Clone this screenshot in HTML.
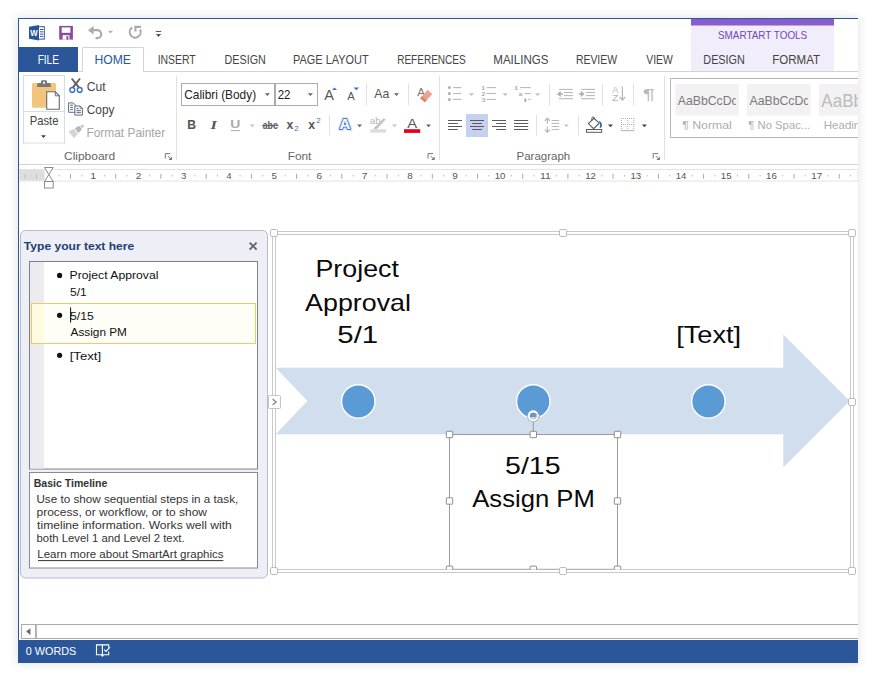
<!DOCTYPE html>
<html>
<head>
<meta charset="utf-8">
<title>Document1 - Word</title>
<style>
html,body{margin:0;padding:0;}
body{width:876px;height:681px;overflow:hidden;background:#fff;position:relative;font-family:"Liberation Sans",sans-serif;}
svg{display:block;position:absolute;left:0;top:0;overflow:visible;}
svg text{font-family:"Liberation Sans",sans-serif;white-space:pre;}
.rg{position:absolute;overflow:hidden;}
#shadow{position:absolute;left:18px;top:18px;width:840px;height:645px;background:#fff;box-shadow:0 0 9px 1px rgba(0,0,0,.11);}
#frame{position:absolute;left:18px;top:18px;width:840px;height:645px;box-sizing:border-box;border-top:1px solid #2b579a;border-left:1px solid #2b579a;pointer-events:none;}
</style>
</head>
<body>
<div id="shadow"></div>
<!-- title bar / quick access toolbar -->
<div class="rg" style="left:18px;top:18px;width:840px;height:29px;"><svg width="840" height="29" viewBox="18 18 840 29">
<rect x="691" y="25" width="143" height="22" fill="#f1edfa"/>
<rect x="691" y="18" width="143" height="7.5" fill="#8a5dcd"/>
<text x="717.95" y="39" font-size="11" fill="#7048b6" textLength="89.3" lengthAdjust="spacingAndGlyphs">SMARTART TOOLS</text>
<rect x="38" y="26.7" width="6.3" height="12.4" fill="#fff" stroke="#2b579a" stroke-width="1"/>
<line x1="40" y1="29.5" x2="43.2" y2="29.5" stroke="#2b579a" stroke-width="1"/>
<line x1="40" y1="31.8" x2="43.2" y2="31.8" stroke="#2b579a" stroke-width="1"/>
<line x1="40" y1="34.1" x2="43.2" y2="34.1" stroke="#2b579a" stroke-width="1"/>
<line x1="40" y1="36.4" x2="43.2" y2="36.4" stroke="#2b579a" stroke-width="1"/>
<path d="M29 26.8L39 25V40.6L29 38.8Z" fill="#2b579a"/>
<text x="30.2" y="36.2" font-size="9" fill="#fff" textLength="7.41" lengthAdjust="spacingAndGlyphs" font-weight="bold">W</text>
<path d="M59.2 25.9H72.9V39.6H59.2Z" fill="#8a4a9f"/>
<rect x="61.7" y="27.4" width="8.7" height="5.4" fill="#fff"/>
<rect x="62.6" y="35.2" width="6.9" height="4.4" fill="#fff"/>
<rect x="66.4" y="36.2" width="2.0" height="3.4" fill="#8a4a9f"/>
<path d="M88 30.2L93.6 25.9V34.5Z" fill="#ababab"/>
<path d="M92.6 30.2H97.2A4 4 0 0 1 97.2 38.2H95.6" fill="none" stroke="#ababab" stroke-width="2.2"/>
<path d="M107.9 30.8h5.2l-2.6 2.8z" fill="#b5b5b5"/>
<path d="M132.2 27.5A5.5 5.5 0 1 0 140.1 29.6" fill="none" stroke="#ababab" stroke-width="2.1"/>
<path d="M135.4 31.6V26.9H141" fill="none" stroke="#ababab" stroke-width="2.1"/>
<line x1="155.8" y1="31.5" x2="161.2" y2="31.5" stroke="#555" stroke-width="1"/>
<path d="M155.8 34H161.2L158.5 36.9Z" fill="#555"/>
</svg></div>
<!-- ribbon tabs -->
<div class="rg" style="left:18px;top:47px;width:840px;height:25px;"><svg width="840" height="25" viewBox="18 47 840 25">
<rect x="691" y="47" width="143" height="24.5" fill="#f1edfa"/>
<line x1="18" y1="71.5" x2="858" y2="71.5" stroke="#d4d4d4" stroke-width="1"/>
<rect x="18" y="47" width="60" height="25" fill="#2b579a"/>
<text x="37.67" y="64" font-size="12.2" fill="#fff" textLength="21.25" lengthAdjust="spacingAndGlyphs">FILE</text>
<path d="M82.5 72V47.5H143.5V72" fill="#fff" stroke="#d4d4d4" stroke-width="1"/>
<rect x="83" y="70" width="60" height="3" fill="#fff"/>
<text x="94.4" y="64" font-size="12.2" fill="#2b579a" textLength="36.52" lengthAdjust="spacingAndGlyphs">HOME</text>
<text x="157.63" y="64" font-size="12.2" fill="#444" textLength="38.12" lengthAdjust="spacingAndGlyphs">INSERT</text>
<text x="224.51" y="64" font-size="12.2" fill="#444" textLength="41.37" lengthAdjust="spacingAndGlyphs">DESIGN</text>
<text x="293.1" y="64" font-size="12.2" fill="#444" textLength="75.47" lengthAdjust="spacingAndGlyphs">PAGE LAYOUT</text>
<text x="397.17" y="64" font-size="12.2" fill="#444" textLength="68.57" lengthAdjust="spacingAndGlyphs">REFERENCES</text>
<text x="493.25" y="64" font-size="12.2" fill="#444" textLength="55.26" lengthAdjust="spacingAndGlyphs">MAILINGS</text>
<text x="575.94" y="64" font-size="12.2" fill="#444" textLength="41.11" lengthAdjust="spacingAndGlyphs">REVIEW</text>
<text x="646.25" y="64" font-size="12.2" fill="#444" textLength="26.49" lengthAdjust="spacingAndGlyphs">VIEW</text>
<text x="703.31" y="64" font-size="12.2" fill="#444" textLength="41.58" lengthAdjust="spacingAndGlyphs">DESIGN</text>
<text x="772.25" y="64" font-size="12.2" fill="#444" textLength="47.81" lengthAdjust="spacingAndGlyphs">FORMAT</text>
</svg></div>
<!-- ribbon: Home tab -->
<div class="rg" style="left:18px;top:72px;width:840px;height:92px;"><svg width="840" height="92" viewBox="18 72 840 92">
<rect x="23.5" y="75.5" width="41" height="67.5" fill="#fff" stroke="#d7dce4" stroke-width="1"/>
<line x1="23.5" y1="111.5" x2="64.5" y2="111.5" stroke="#d7dce4" stroke-width="1"/>
<rect x="32" y="83" width="24" height="24.8" fill="#f2c57c" rx="1.5"/>
<path d="M37.2 86.9V84.2Q37.2 83 38.6 83H41V81.4Q41 80.2 42.2 80.2H45.8Q47 80.2 47 81.4V83H49.4Q50.8 83 50.8 84.2V86.9Z" fill="#787878"/>
<rect x="43" y="81.8" width="2" height="1.8" fill="#fff"/>
<path d="M46.7 91.8H55.3L59.3 95.8V109.3H46.7Z" fill="#fff" stroke="#6a6a6a" stroke-width="1.1"/>
<path d="M55.3 91.8V95.8H59.3" fill="none" stroke="#6a6a6a" stroke-width="1"/>
<text x="29.67" y="124.7" font-size="12.2" fill="#444" textLength="28.83" lengthAdjust="spacingAndGlyphs">Paste</text>
<path d="M41.0 135.3h5l-2.5 2.6z" fill="#444"/>
<path d="M71.7 78.5L79 87.6" fill="none" stroke="#5f5f5f" stroke-width="1.9"/>
<path d="M80 78.5L72.8 87.6" fill="none" stroke="#5f5f5f" stroke-width="1.9"/>
<circle cx="72.3" cy="89.9" r="2.4" fill="#fff" stroke="#3d73bd" stroke-width="1.4"/>
<circle cx="79.7" cy="89.9" r="2.4" fill="#fff" stroke="#3d73bd" stroke-width="1.4"/>
<text x="86.79" y="90.6" font-size="12.2" fill="#444" textLength="18.91" lengthAdjust="spacingAndGlyphs">Cut</text>
<path d="M68.6 102.9H73.2L75.4 105.1V112.3H68.6Z" fill="#fff" stroke="#6a6a6a" stroke-width="1"/>
<path d="M74.8 106H80.1L82.4 108.3V115.1H74.8Z" fill="#fff" stroke="#6a6a6a" stroke-width="1"/>
<path d="M80.1 106V108.3H82.4" fill="none" stroke="#6a6a6a" stroke-width="0.8"/>
<line x1="70.2" y1="105.2" x2="72.9" y2="105.2" stroke="#3a62a8" stroke-width="1"/>
<line x1="70.2" y1="107.4" x2="72.9" y2="107.4" stroke="#3a62a8" stroke-width="1"/>
<line x1="70.2" y1="109.6" x2="72.9" y2="109.6" stroke="#3a62a8" stroke-width="1"/>
<line x1="76.4" y1="108.7" x2="78.6" y2="108.7" stroke="#3a62a8" stroke-width="1"/>
<line x1="76.4" y1="110.7" x2="80.9" y2="110.7" stroke="#3a62a8" stroke-width="1"/>
<line x1="76.4" y1="112.7" x2="80.9" y2="112.7" stroke="#3a62a8" stroke-width="1"/>
<text x="86.81" y="113.9" font-size="12.2" fill="#444" textLength="27.62" lengthAdjust="spacingAndGlyphs">Copy</text>
<path d="M68.4 131.8L74 128.8L77.8 133.8L74.2 138.2Z" fill="#d4d4d4"/>
<path d="M74.8 128.2L79.2 125.8L81.8 129.6L78.4 133Z" fill="#b6b6b6"/>
<path d="M80.2 126L83 124.6L84.2 126.4L81.6 128.2Z" fill="#c6c6c6"/>
<text x="86.42" y="136.8" font-size="12.2" fill="#a6a6a6" textLength="78.77" lengthAdjust="spacingAndGlyphs">Format Painter</text>
<text x="64.0" y="160" font-size="11.6" fill="#666" textLength="51.15" lengthAdjust="spacingAndGlyphs">Clipboard</text>
<path d="M165.3 158.6V153.6H170.3" fill="none" stroke="#777" stroke-width="1"/>
<path d="M168.5 160.1H172.0V156.6Z" fill="#777"/>
<line x1="167.9" y1="156.0" x2="171.3" y2="159.4" stroke="#777" stroke-width="1"/>
<line x1="176.5" y1="76" x2="176.5" y2="160" stroke="#e1e1e1" stroke-width="1"/>
<rect x="181.5" y="83.5" width="93" height="22" fill="#fff" stroke="#ababab" stroke-width="1"/>
<rect x="275.5" y="83.5" width="42" height="22" fill="#fff" stroke="#ababab" stroke-width="1"/>
<text x="184.21" y="99.3" font-size="12.2" fill="#222" textLength="71.9" lengthAdjust="spacingAndGlyphs">Calibri (Body)</text>
<path d="M264.9 93.3h5l-2.5 2.6z" fill="#666"/>
<text x="277.73" y="99.3" font-size="12.2" fill="#222" textLength="12.67" lengthAdjust="spacingAndGlyphs">22</text>
<path d="M307.9 93.3h5l-2.5 2.6z" fill="#666"/>
<text x="324.16" y="99.7" font-size="14.6" fill="#555" textLength="9.67" lengthAdjust="spacingAndGlyphs">A</text>
<path d="M332 90.1H337L334.5 87.5Z" fill="#3d73bd"/>
<text x="347.37" y="99.7" font-size="10.6" fill="#555" textLength="7.45" lengthAdjust="spacingAndGlyphs">A</text>
<path d="M353.6 87.6H359L356.3 90.3Z" fill="#3d73bd"/>
<line x1="366.5" y1="83.5" x2="366.5" y2="105.5" stroke="#e1e1e1" stroke-width="1"/>
<text x="374.27" y="97.8" font-size="12.4" fill="#555" textLength="15.01" lengthAdjust="spacingAndGlyphs">Aa</text>
<path d="M394.0 93.3h5l-2.5 2.6z" fill="#666"/>
<line x1="408.5" y1="83.5" x2="408.5" y2="105.5" stroke="#e1e1e1" stroke-width="1"/>
<text x="417.37" y="95.6" font-size="11.5" fill="#777" textLength="7.65" lengthAdjust="spacingAndGlyphs">A</text>
<path d="M420.2 98.2L427.6 89.8L432.3 94L424.9 102.2Z" fill="#e9a493"/>
<path d="M420.2 98.2L422 96.2L426.7 100.3L424.9 102.2Z" fill="#e0806a"/>
<text x="187.18" y="128.9" font-size="12" fill="#555" textLength="8.76" lengthAdjust="spacingAndGlyphs" font-weight="bold">B</text>
<text x="210.4" y="128.9" font-size="13.4" fill="#555" textLength="6.4" lengthAdjust="spacingAndGlyphs" font-weight="bold" font-style="italic" style="font-family:'Liberation Serif',serif">I</text>
<text x="230.36" y="128.4" font-size="11.4" fill="#ababab" textLength="10.07" lengthAdjust="spacingAndGlyphs" font-weight="bold">U</text>
<line x1="231" y1="130.6" x2="240" y2="130.6" stroke="#ababab" stroke-width="1"/>
<path d="M249.8 124.6h5l-2.5 2.6z" fill="#c6c6c6"/>
<text x="262.74" y="128.6" font-size="11" fill="#5c5c5c" textLength="15.11" lengthAdjust="spacingAndGlyphs" font-weight="bold">abc</text>
<line x1="262.2" y1="125.6" x2="278.6" y2="125.6" stroke="#5c5c5c" stroke-width="1"/>
<text x="286.51" y="128.9" font-size="12.6" fill="#555" textLength="6.8" lengthAdjust="spacingAndGlyphs" font-weight="bold">x</text>
<text x="294.2" y="131.2" font-size="6.4" fill="#3d73bd" textLength="4.4" lengthAdjust="spacingAndGlyphs">2</text>
<text x="308.21" y="128.9" font-size="12.6" fill="#555" textLength="6.8" lengthAdjust="spacingAndGlyphs" font-weight="bold">x</text>
<text x="316.2" y="123.4" font-size="6.4" fill="#3d73bd" textLength="4.4" lengthAdjust="spacingAndGlyphs">2</text>
<line x1="329.5" y1="115" x2="329.5" y2="135.5" stroke="#e1e1e1" stroke-width="1"/>
<text x="339.43" y="129.2" font-size="14.6" fill="#fff" textLength="10.78" lengthAdjust="spacingAndGlyphs" font-weight="bold" stroke="#d6e5f8" stroke-width="4.2" stroke-linejoin="round">A</text>
<text x="339.43" y="129.2" font-size="14.6" fill="#fff" textLength="10.78" lengthAdjust="spacingAndGlyphs" font-weight="bold" stroke="#4a7dc6" stroke-width="2" stroke-linejoin="round" paint-order="stroke">A</text>
<path d="M357.1 124.6h5l-2.5 2.6z" fill="#666"/>
<text x="369.79" y="124.2" font-size="9.6" fill="#b4b4b4" textLength="10.83" lengthAdjust="spacingAndGlyphs">ab</text>
<path d="M375.6 126.6L383.8 118L385.6 119.6L377.6 128.4Z" fill="#c4c4c4"/>
<path d="M373.6 129L375.6 126.6L377.6 128.4Z" fill="#b0b0b0"/>
<rect x="370.2" y="129.2" width="15.8" height="3.5" fill="#dcdcdc"/>
<path d="M392.0 124.6h5l-2.5 2.6z" fill="#c6c6c6"/>
<text x="407.16" y="128.4" font-size="13.6" fill="#555" textLength="9.87" lengthAdjust="spacingAndGlyphs">A</text>
<rect x="404" y="129.2" width="16.2" height="3.7" fill="#e8001c"/>
<path d="M426.0 124.6h5l-2.5 2.6z" fill="#666"/>
<text x="287.72" y="160" font-size="11.6" fill="#666" textLength="23.68" lengthAdjust="spacingAndGlyphs">Font</text>
<path d="M428 158.6V153.6H433" fill="none" stroke="#777" stroke-width="1"/>
<path d="M431.2 160.1H434.7V156.6Z" fill="#777"/>
<line x1="430.6" y1="156.0" x2="434" y2="159.4" stroke="#777" stroke-width="1"/>
<line x1="439.5" y1="76" x2="439.5" y2="160" stroke="#e1e1e1" stroke-width="1"/>
<circle cx="449.4" cy="87.6" r="1.5" fill="#b0b0b0"/>
<line x1="453" y1="87.6" x2="461.2" y2="87.6" stroke="#b9b9b9" stroke-width="1.1"/>
<circle cx="449.4" cy="93.5" r="1.5" fill="#b0b0b0"/>
<line x1="453" y1="93.5" x2="461.2" y2="93.5" stroke="#b9b9b9" stroke-width="1.1"/>
<circle cx="449.4" cy="99.4" r="1.5" fill="#b0b0b0"/>
<line x1="453" y1="99.4" x2="461.2" y2="99.4" stroke="#b9b9b9" stroke-width="1.1"/>
<path d="M468.7 93.2h5.4l-2.7 2.9z" fill="#c2c2c2"/>
<text x="481.37" y="89.8" font-size="6.2" fill="#ababab" textLength="3.83" lengthAdjust="spacingAndGlyphs" font-weight="bold">1</text>
<text x="481.57" y="95.8" font-size="6.2" fill="#ababab" textLength="3.69" lengthAdjust="spacingAndGlyphs" font-weight="bold">2</text>
<text x="481.66" y="101.7" font-size="6.2" fill="#ababab" textLength="3.58" lengthAdjust="spacingAndGlyphs" font-weight="bold">3</text>
<line x1="486.6" y1="87.6" x2="496" y2="87.6" stroke="#b9b9b9" stroke-width="1.1"/>
<line x1="486.6" y1="93.5" x2="496" y2="93.5" stroke="#b9b9b9" stroke-width="1.1"/>
<line x1="486.6" y1="99.4" x2="496" y2="99.4" stroke="#b9b9b9" stroke-width="1.1"/>
<path d="M502.5 93.2h5.4l-2.7 2.9z" fill="#c2c2c2"/>
<text x="514.37" y="89.8" font-size="6.2" fill="#ababab" textLength="3.83" lengthAdjust="spacingAndGlyphs" font-weight="bold">1</text>
<line x1="520" y1="87.6" x2="530.8" y2="87.6" stroke="#b9b9b9" stroke-width="1.1"/>
<text x="518.81" y="95.6" font-size="6.2" fill="#ababab" textLength="3.55" lengthAdjust="spacingAndGlyphs" font-weight="bold">a</text>
<line x1="524.6" y1="93.5" x2="530.8" y2="93.5" stroke="#b9b9b9" stroke-width="1.1"/>
<text x="523.48" y="101.6" font-size="6.2" fill="#ababab" textLength="3.64" lengthAdjust="spacingAndGlyphs" font-weight="bold">i</text>
<line x1="528.2" y1="99.4" x2="530.8" y2="99.4" stroke="#b9b9b9" stroke-width="1.1"/>
<path d="M534.9 93.2h5.4l-2.7 2.9z" fill="#c2c2c2"/>
<line x1="549.5" y1="83.5" x2="549.5" y2="105.5" stroke="#e1e1e1" stroke-width="1"/>
<line x1="559" y1="89.4" x2="572.8" y2="89.4" stroke="#b9b9b9" stroke-width="1.1"/>
<line x1="563.8" y1="92.5" x2="572.8" y2="92.5" stroke="#b9b9b9" stroke-width="1.1"/>
<line x1="563.8" y1="95.6" x2="572.8" y2="95.6" stroke="#b9b9b9" stroke-width="1.1"/>
<line x1="559" y1="98.7" x2="572.8" y2="98.7" stroke="#b9b9b9" stroke-width="1.1"/>
<line x1="581.2" y1="89.4" x2="595" y2="89.4" stroke="#b9b9b9" stroke-width="1.1"/>
<line x1="586" y1="92.5" x2="595" y2="92.5" stroke="#b9b9b9" stroke-width="1.1"/>
<line x1="586" y1="95.6" x2="595" y2="95.6" stroke="#b9b9b9" stroke-width="1.1"/>
<line x1="581.2" y1="98.7" x2="595" y2="98.7" stroke="#b9b9b9" stroke-width="1.1"/>
<path d="M557 94L560.8 90.8V93.3H563V94.7H560.8V97.2Z" fill="#b0b0b0"/>
<path d="M584.6 94L580.8 90.8V93.3H578.8V94.7H580.8V97.2Z" fill="#b0b0b0"/>
<line x1="602.5" y1="83.5" x2="602.5" y2="105.5" stroke="#e1e1e1" stroke-width="1"/>
<text x="612.18" y="92.6" font-size="8.6" fill="#b9b9b9" textLength="6.24" lengthAdjust="spacingAndGlyphs">A</text>
<text x="612.06" y="101" font-size="8.6" fill="#b9b9b9" textLength="6.47" lengthAdjust="spacingAndGlyphs">Z</text>
<path d="M622.4 86.6V99.6M619.6 97L622.4 100L625.2 97" fill="none" stroke="#b9b9b9" stroke-width="1.2"/>
<line x1="633.5" y1="83.5" x2="633.5" y2="105.5" stroke="#e1e1e1" stroke-width="1"/>
<text x="642.69" y="99.4" font-size="15.2" fill="#b9b9b9" textLength="12.28" lengthAdjust="spacingAndGlyphs">¶</text>
<rect x="466" y="114" width="22" height="23" fill="#c5d1ee"/>
<line x1="448" y1="120.5" x2="462" y2="120.5" stroke="#5a5a5a" stroke-width="1"/>
<line x1="448" y1="123.5" x2="457.8" y2="123.5" stroke="#5a5a5a" stroke-width="1"/>
<line x1="448" y1="126.5" x2="462" y2="126.5" stroke="#5a5a5a" stroke-width="1"/>
<line x1="448" y1="129.5" x2="457.8" y2="129.5" stroke="#5a5a5a" stroke-width="1"/>
<line x1="470" y1="120.5" x2="484" y2="120.5" stroke="#5a5a5a" stroke-width="1"/>
<line x1="472.2" y1="123.5" x2="481.8" y2="123.5" stroke="#5a5a5a" stroke-width="1"/>
<line x1="470" y1="126.5" x2="484" y2="126.5" stroke="#5a5a5a" stroke-width="1"/>
<line x1="472.2" y1="129.5" x2="481.8" y2="129.5" stroke="#5a5a5a" stroke-width="1"/>
<line x1="492" y1="120.5" x2="506" y2="120.5" stroke="#5a5a5a" stroke-width="1"/>
<line x1="496.2" y1="123.5" x2="506" y2="123.5" stroke="#5a5a5a" stroke-width="1"/>
<line x1="492" y1="126.5" x2="506" y2="126.5" stroke="#5a5a5a" stroke-width="1"/>
<line x1="496.2" y1="129.5" x2="506" y2="129.5" stroke="#5a5a5a" stroke-width="1"/>
<line x1="514" y1="120.5" x2="528.2" y2="120.5" stroke="#5a5a5a" stroke-width="1"/>
<line x1="514" y1="123.5" x2="528.2" y2="123.5" stroke="#5a5a5a" stroke-width="1"/>
<line x1="514" y1="126.5" x2="528.2" y2="126.5" stroke="#5a5a5a" stroke-width="1"/>
<line x1="514" y1="129.5" x2="528.2" y2="129.5" stroke="#5a5a5a" stroke-width="1"/>
<line x1="536.5" y1="115" x2="536.5" y2="135.5" stroke="#e1e1e1" stroke-width="1"/>
<path d="M547.4 118.4V123.6M544.8 121L547.4 118.2L550 121M547.4 126.6V132.2M544.8 129.6L547.4 132.4L550 129.6" fill="none" stroke="#b9b9b9" stroke-width="1.2"/>
<line x1="551.6" y1="120.5" x2="559.2" y2="120.5" stroke="#b9b9b9" stroke-width="1"/>
<line x1="551.6" y1="123.5" x2="559.2" y2="123.5" stroke="#b9b9b9" stroke-width="1"/>
<line x1="551.6" y1="126.5" x2="559.2" y2="126.5" stroke="#b9b9b9" stroke-width="1"/>
<line x1="551.6" y1="129.5" x2="559.2" y2="129.5" stroke="#b9b9b9" stroke-width="1"/>
<path d="M563.9 124.6h5l-2.5 2.6z" fill="#c6c6c6"/>
<line x1="578.5" y1="115" x2="578.5" y2="135.5" stroke="#e1e1e1" stroke-width="1"/>
<rect x="586.5" y="129.5" width="15.2" height="2.8" fill="#fff" stroke="#5a5a5a" stroke-width="1"/>
<path d="M588.3 123.6L594 118.3L599.2 123.2L593.6 128.7Z" fill="#fff" stroke="#5a5a5a" stroke-width="1.1"/>
<path d="M591.8 120.8V118.4Q591.8 117 593.2 117Q594.6 117 594.6 118.4V119.2" fill="none" stroke="#5a5a5a" stroke-width="1"/>
<path d="M598.4 120.6Q602.6 122.2 601.8 126.4Q601.2 128.6 599.6 127.4Q601.2 124 598.4 120.6Z" fill="#2f62ad"/>
<path d="M608.0 124.6h5l-2.5 2.6z" fill="#444"/>
<line x1="621" y1="118.5" x2="634.4" y2="118.5" stroke="#b2b2b2" stroke-width="1" stroke-dasharray="1 1"/>
<line x1="621" y1="124.5" x2="634.4" y2="124.5" stroke="#b2b2b2" stroke-width="1" stroke-dasharray="1 1"/>
<line x1="621" y1="130.6" x2="634.4" y2="130.6" stroke="#b2b2b2" stroke-width="1"/>
<line x1="621.5" y1="118" x2="621.5" y2="130.6" stroke="#b2b2b2" stroke-width="1" stroke-dasharray="1 1"/>
<line x1="627.7" y1="118" x2="627.7" y2="130.6" stroke="#b2b2b2" stroke-width="1" stroke-dasharray="1 1"/>
<line x1="633.9" y1="118" x2="633.9" y2="130.6" stroke="#b2b2b2" stroke-width="1" stroke-dasharray="1 1"/>
<path d="M641.9 124.6h5l-2.5 2.6z" fill="#444"/>
<text x="516.55" y="160" font-size="11.6" fill="#666" textLength="53.67" lengthAdjust="spacingAndGlyphs">Paragraph</text>
<path d="M653.2 158.6V153.6H658.2" fill="none" stroke="#777" stroke-width="1"/>
<path d="M656.4000000000001 160.1H659.9000000000001V156.6Z" fill="#777"/>
<line x1="655.8000000000001" y1="156.0" x2="659.2" y2="159.4" stroke="#777" stroke-width="1"/>
<line x1="664.5" y1="76" x2="664.5" y2="160" stroke="#e1e1e1" stroke-width="1"/>
<path d="M858 78.5H670.5V137.5H858" fill="#fff" stroke="#b4b4b4" stroke-width="1"/>
<rect x="675.3" y="84" width="63.6" height="31.6" fill="#f3f1f3"/>
<rect x="747" y="84" width="63.4" height="31.6" fill="#f3f1f3"/>
<rect x="819" y="84" width="39" height="31.6" fill="#f3f1f3"/>
<clipPath id="cs1"><rect x="675.3" y="84" width="60.4" height="31.6"/></clipPath>
<clipPath id="cs2"><rect x="747" y="84" width="60.8" height="31.6"/></clipPath>
<clipPath id="cs3"><rect x="819" y="78" width="39" height="60"/></clipPath>
<text x="677.77" y="104.5" font-size="12.8" fill="#7a7a7a" textLength="59.98" lengthAdjust="spacingAndGlyphs" clip-path="url(#cs1)">AaBbCcDc</text>
<text x="749.47" y="104.5" font-size="12.8" fill="#7a7a7a" textLength="59.98" lengthAdjust="spacingAndGlyphs" clip-path="url(#cs2)">AaBbCcDc</text>
<text x="821.36" y="107" font-size="18.6" fill="#bcbcbc" textLength="62.53" lengthAdjust="spacingAndGlyphs" clip-path="url(#cs3)">AaBbCc</text>
<text x="682.21" y="128.7" font-size="11.8" fill="#adadad" textLength="49.62" lengthAdjust="spacingAndGlyphs">¶ Normal</text>
<text x="748.35" y="128.7" font-size="11.8" fill="#adadad" textLength="61.88" lengthAdjust="spacingAndGlyphs">¶ No Spac...</text>
<text x="823.75" y="128.7" font-size="11.8" fill="#adadad" textLength="52.52" lengthAdjust="spacingAndGlyphs" clip-path="url(#cs3)">Heading 1</text>
</svg></div>
<!-- ruler -->
<div class="rg" style="left:18px;top:164px;width:840px;height:26px;"><svg width="840" height="26" viewBox="18 164 840 26">
<line x1="18" y1="164.5" x2="858" y2="164.5" stroke="#d4d4d4" stroke-width="1"/>
<rect x="19" y="169.5" width="839" height="11.5" fill="#fff" stroke="#e3e3e3" stroke-width="1"/>
<rect x="19.5" y="170" width="25" height="10.5" fill="#dedede"/>
<line x1="25.1" y1="173.8" x2="25.1" y2="178.8" stroke="#c2c2c2" stroke-width="1"/>
<line x1="36.5" y1="173.8" x2="36.5" y2="178.8" stroke="#c2c2c2" stroke-width="1"/>
<rect x="30.3" y="175.3" width="1" height="1" fill="#c2c2c2"/>
<rect x="41.7" y="175.3" width="1" height="1" fill="#c2c2c2"/>
<rect x="58.7" y="175.3" width="1" height="1" fill="#9a9a9a"/>
<rect x="81.3" y="175.3" width="1" height="1" fill="#9a9a9a"/>
<line x1="70.5" y1="173.8" x2="70.5" y2="178.8" stroke="#a9a9a9" stroke-width="1"/>
<text x="90.2" y="179" font-size="9.4" fill="#555" textLength="5.92" lengthAdjust="spacingAndGlyphs">1</text>
<rect x="103.9" y="175.3" width="1" height="1" fill="#9a9a9a"/>
<rect x="126.5" y="175.3" width="1" height="1" fill="#9a9a9a"/>
<line x1="115.7" y1="173.8" x2="115.7" y2="178.8" stroke="#a9a9a9" stroke-width="1"/>
<text x="135.69" y="179" font-size="9.4" fill="#555" textLength="5.62" lengthAdjust="spacingAndGlyphs">2</text>
<rect x="149.1" y="175.3" width="1" height="1" fill="#9a9a9a"/>
<rect x="171.8" y="175.3" width="1" height="1" fill="#9a9a9a"/>
<line x1="160.9" y1="173.8" x2="160.9" y2="178.8" stroke="#a9a9a9" stroke-width="1"/>
<text x="181.14" y="179" font-size="9.4" fill="#555" textLength="5.39" lengthAdjust="spacingAndGlyphs">3</text>
<rect x="194.4" y="175.3" width="1" height="1" fill="#9a9a9a"/>
<rect x="217.0" y="175.3" width="1" height="1" fill="#9a9a9a"/>
<line x1="206.2" y1="173.8" x2="206.2" y2="178.8" stroke="#a9a9a9" stroke-width="1"/>
<text x="226.5" y="179" font-size="9.4" fill="#555" textLength="5.07" lengthAdjust="spacingAndGlyphs">4</text>
<rect x="239.6" y="175.3" width="1" height="1" fill="#9a9a9a"/>
<rect x="262.2" y="175.3" width="1" height="1" fill="#9a9a9a"/>
<line x1="251.4" y1="173.8" x2="251.4" y2="178.8" stroke="#a9a9a9" stroke-width="1"/>
<text x="271.51" y="179" font-size="9.4" fill="#555" textLength="5.39" lengthAdjust="spacingAndGlyphs">5</text>
<rect x="284.8" y="175.3" width="1" height="1" fill="#9a9a9a"/>
<rect x="307.4" y="175.3" width="1" height="1" fill="#9a9a9a"/>
<line x1="296.6" y1="173.8" x2="296.6" y2="178.8" stroke="#a9a9a9" stroke-width="1"/>
<text x="316.6" y="179" font-size="9.4" fill="#555" textLength="5.53" lengthAdjust="spacingAndGlyphs">6</text>
<rect x="330.0" y="175.3" width="1" height="1" fill="#9a9a9a"/>
<rect x="352.6" y="175.3" width="1" height="1" fill="#9a9a9a"/>
<line x1="341.8" y1="173.8" x2="341.8" y2="178.8" stroke="#a9a9a9" stroke-width="1"/>
<text x="361.79" y="179" font-size="9.4" fill="#555" textLength="5.62" lengthAdjust="spacingAndGlyphs">7</text>
<rect x="375.2" y="175.3" width="1" height="1" fill="#9a9a9a"/>
<rect x="397.9" y="175.3" width="1" height="1" fill="#9a9a9a"/>
<line x1="387.0" y1="173.8" x2="387.0" y2="178.8" stroke="#a9a9a9" stroke-width="1"/>
<text x="407.18" y="179" font-size="9.4" fill="#555" textLength="5.44" lengthAdjust="spacingAndGlyphs">8</text>
<rect x="420.5" y="175.3" width="1" height="1" fill="#9a9a9a"/>
<rect x="443.1" y="175.3" width="1" height="1" fill="#9a9a9a"/>
<line x1="432.3" y1="173.8" x2="432.3" y2="178.8" stroke="#a9a9a9" stroke-width="1"/>
<text x="452.33" y="179" font-size="9.4" fill="#555" textLength="5.53" lengthAdjust="spacingAndGlyphs">9</text>
<rect x="465.7" y="175.3" width="1" height="1" fill="#9a9a9a"/>
<rect x="488.3" y="175.3" width="1" height="1" fill="#9a9a9a"/>
<line x1="477.5" y1="173.8" x2="477.5" y2="178.8" stroke="#a9a9a9" stroke-width="1"/>
<text x="494.78" y="179" font-size="9.4" fill="#555" textLength="10.71" lengthAdjust="spacingAndGlyphs">10</text>
<rect x="510.9" y="175.3" width="1" height="1" fill="#9a9a9a"/>
<rect x="533.5" y="175.3" width="1" height="1" fill="#9a9a9a"/>
<line x1="522.7" y1="173.8" x2="522.7" y2="178.8" stroke="#a9a9a9" stroke-width="1"/>
<text x="539.91" y="179" font-size="9.4" fill="#555" textLength="10.89" lengthAdjust="spacingAndGlyphs">11</text>
<rect x="556.1" y="175.3" width="1" height="1" fill="#9a9a9a"/>
<rect x="578.7" y="175.3" width="1" height="1" fill="#9a9a9a"/>
<line x1="567.9" y1="173.8" x2="567.9" y2="178.8" stroke="#a9a9a9" stroke-width="1"/>
<text x="585.17" y="179" font-size="9.4" fill="#555" textLength="10.84" lengthAdjust="spacingAndGlyphs">12</text>
<rect x="601.3" y="175.3" width="1" height="1" fill="#9a9a9a"/>
<rect x="624.0" y="175.3" width="1" height="1" fill="#9a9a9a"/>
<line x1="613.1" y1="173.8" x2="613.1" y2="178.8" stroke="#a9a9a9" stroke-width="1"/>
<text x="630.47" y="179" font-size="9.4" fill="#555" textLength="10.76" lengthAdjust="spacingAndGlyphs">13</text>
<rect x="646.6" y="175.3" width="1" height="1" fill="#9a9a9a"/>
<rect x="669.2" y="175.3" width="1" height="1" fill="#9a9a9a"/>
<line x1="658.4" y1="173.8" x2="658.4" y2="178.8" stroke="#a9a9a9" stroke-width="1"/>
<text x="675.69" y="179" font-size="9.4" fill="#555" textLength="10.6" lengthAdjust="spacingAndGlyphs">14</text>
<rect x="691.8" y="175.3" width="1" height="1" fill="#9a9a9a"/>
<rect x="714.4" y="175.3" width="1" height="1" fill="#9a9a9a"/>
<line x1="703.6" y1="173.8" x2="703.6" y2="178.8" stroke="#a9a9a9" stroke-width="1"/>
<text x="720.88" y="179" font-size="9.4" fill="#555" textLength="10.73" lengthAdjust="spacingAndGlyphs">15</text>
<rect x="737.0" y="175.3" width="1" height="1" fill="#9a9a9a"/>
<rect x="759.6" y="175.3" width="1" height="1" fill="#9a9a9a"/>
<line x1="748.8" y1="173.8" x2="748.8" y2="178.8" stroke="#a9a9a9" stroke-width="1"/>
<text x="766.07" y="179" font-size="9.4" fill="#555" textLength="10.76" lengthAdjust="spacingAndGlyphs">16</text>
<rect x="782.2" y="175.3" width="1" height="1" fill="#9a9a9a"/>
<rect x="804.8" y="175.3" width="1" height="1" fill="#9a9a9a"/>
<line x1="794.0" y1="173.8" x2="794.0" y2="178.8" stroke="#a9a9a9" stroke-width="1"/>
<text x="811.27" y="179" font-size="9.4" fill="#555" textLength="10.84" lengthAdjust="spacingAndGlyphs">17</text>
<rect x="827.4" y="175.3" width="1" height="1" fill="#9a9a9a"/>
<rect x="850.1" y="175.3" width="1" height="1" fill="#9a9a9a"/>
<line x1="839.2" y1="173.8" x2="839.2" y2="178.8" stroke="#a9a9a9" stroke-width="1"/>
<path d="M44.5 167.5H53.2L48.85 174.6Z" fill="#fff" stroke="#8c8c8c" stroke-width="1"/>
<path d="M44.5 181.5H53.2L48.85 174.6Z" fill="#fff" stroke="#8c8c8c" stroke-width="1"/>
<rect x="44.5" y="181.5" width="8.7" height="6.5" fill="#fff" stroke="#8c8c8c" stroke-width="1"/>
</svg></div>
<!-- document area: SmartArt text pane + graphic -->
<div class="rg" style="left:18px;top:190px;width:840px;height:434px;"><svg width="840" height="434" viewBox="18 190 840 434">
<rect x="272.5" y="231.5" width="581" height="341" fill="#fff" stroke="#c9c9c9" stroke-width="1"/>
<rect x="275.5" y="234.5" width="575" height="335" fill="#fff" stroke="#c9c9c9" stroke-width="1"/>
<path d="M275.7 367.7H783.3V334.6L849.8 401L783.3 467.6V434.2H275.7L307.4 400.9Z" fill="#d0deee"/>
<rect x="275.5" y="234.5" width="575" height="335" fill="none" stroke="#c9c9c9" stroke-width="1"/>
<circle cx="358.3" cy="401.4" r="16.7" fill="#5b9bd5" stroke="#fff" stroke-width="1.4"/>
<circle cx="533.3" cy="401.4" r="16.7" fill="#5b9bd5" stroke="#fff" stroke-width="1.4"/>
<circle cx="708.4" cy="401.4" r="16.7" fill="#5b9bd5" stroke="#fff" stroke-width="1.4"/>
<text x="315.49" y="277.4" font-size="23.8" fill="#0a0a0a" textLength="83.41" lengthAdjust="spacingAndGlyphs">Project</text>
<text x="305.13" y="310.7" font-size="23.8" fill="#0a0a0a" textLength="105.86" lengthAdjust="spacingAndGlyphs">Approval</text>
<text x="337.33" y="342.6" font-size="23.8" fill="#0a0a0a" textLength="40.77" lengthAdjust="spacingAndGlyphs">5/1</text>
<text x="676.2" y="342.6" font-size="23.8" fill="#0a0a0a" textLength="65.0" lengthAdjust="spacingAndGlyphs">[Text]</text>
<text x="505.06" y="474.4" font-size="23.8" fill="#0a0a0a" textLength="55.52" lengthAdjust="spacingAndGlyphs">5/15</text>
<text x="472.24" y="507.2" font-size="23.8" fill="#0a0a0a" textLength="122.56" lengthAdjust="spacingAndGlyphs">Assign PM</text>
<clipPath id="cfr"><rect x="276" y="235" width="574" height="334.4"/></clipPath>
<g clip-path="url(#cfr)">
<rect x="449.5" y="434.5" width="168" height="134.8" fill="none" stroke="#9c9c9c" stroke-width="1"/>
<line x1="533.3" y1="420" x2="533.3" y2="434" stroke="#9c9c9c" stroke-width="1"/>
<rect x="446.3" y="431.3" width="6.4" height="6.4" fill="#fff" stroke="#8e8e8e" stroke-width="1" rx="0.6"/>
<rect x="530.1" y="431.3" width="6.4" height="6.4" fill="#fff" stroke="#8e8e8e" stroke-width="1" rx="0.6"/>
<rect x="614.3" y="431.3" width="6.4" height="6.4" fill="#fff" stroke="#8e8e8e" stroke-width="1" rx="0.6"/>
<rect x="446.3" y="497.8" width="6.4" height="6.4" fill="#fff" stroke="#8e8e8e" stroke-width="1" rx="0.6"/>
<rect x="614.3" y="497.8" width="6.4" height="6.4" fill="#fff" stroke="#8e8e8e" stroke-width="1" rx="0.6"/>
<rect x="446.3" y="566.1" width="6.4" height="6.4" fill="#fff" stroke="#8e8e8e" stroke-width="1" rx="0.6"/>
<rect x="530.1" y="566.1" width="6.4" height="6.4" fill="#fff" stroke="#8e8e8e" stroke-width="1" rx="0.6"/>
<rect x="614.3" y="566.1" width="6.4" height="6.4" fill="#fff" stroke="#8e8e8e" stroke-width="1" rx="0.6"/>
</g>
<circle cx="533.2" cy="415.9" r="4.5" fill="none" stroke="#9a9a9a" stroke-width="3.2"/>
<circle cx="533.2" cy="415.9" r="4.5" fill="none" stroke="#fff" stroke-width="2.1"/>
<path d="M535.6 414.2H539.4V418Z" fill="#fff" stroke="#9a9a9a" stroke-width="0.6"/>
<rect x="270.5" y="229.5" width="7" height="7" fill="#fff" stroke="#bcbcbc" stroke-width="1" rx="1.4"/>
<rect x="559.5" y="229.5" width="7" height="7" fill="#fff" stroke="#bcbcbc" stroke-width="1" rx="1.4"/>
<rect x="848.5" y="229.5" width="7" height="7" fill="#fff" stroke="#bcbcbc" stroke-width="1" rx="1.4"/>
<rect x="848.5" y="398.5" width="7" height="7" fill="#fff" stroke="#bcbcbc" stroke-width="1" rx="1.4"/>
<rect x="270.5" y="567.5" width="7" height="7" fill="#fff" stroke="#bcbcbc" stroke-width="1" rx="1.4"/>
<rect x="559.5" y="567.5" width="7" height="7" fill="#fff" stroke="#bcbcbc" stroke-width="1" rx="1.4"/>
<rect x="848.5" y="567.5" width="7" height="7" fill="#fff" stroke="#bcbcbc" stroke-width="1" rx="1.4"/>
<rect x="268.5" y="395.5" width="12" height="13" fill="#fff" stroke="#c4c4c4" stroke-width="1" rx="1"/>
<path d="M272.6 399L276 402L272.6 405" fill="none" stroke="#8a8a8a" stroke-width="1.4"/>
<rect x="20.5" y="230.5" width="247" height="347.5" fill="#edeef6" stroke="#b9bcc6" stroke-width="1" rx="5"/>
<text x="23.88" y="250" font-size="11.8" fill="#1f3d73" textLength="110.33" lengthAdjust="spacingAndGlyphs" font-weight="bold">Type your text here</text>
<path d="M249.6 242.6L256.6 249.6M256.6 242.6L249.6 249.6" fill="none" stroke="#666" stroke-width="1.9"/>
<rect x="29.5" y="261.5" width="228" height="207.5" fill="#fff" stroke="#808080" stroke-width="1"/>
<rect x="30" y="262" width="14" height="206.5" fill="#ececf0"/>
<rect x="31.5" y="303.5" width="224" height="40" fill="#fffef6" stroke="#f2c867" stroke-width="1"/>
<rect x="32" y="304" width="12" height="39" fill="#fffbe0"/>
<circle cx="59.6" cy="275.4" r="2.6" fill="#111"/>
<circle cx="59.6" cy="315.3" r="2.6" fill="#111"/>
<circle cx="59.6" cy="355.3" r="2.6" fill="#111"/>
<text x="69.59" y="279.3" font-size="11.6" fill="#111" textLength="88.82" lengthAdjust="spacingAndGlyphs">Project Approval</text>
<text x="70.12" y="295.6" font-size="11.6" fill="#111" textLength="16.65" lengthAdjust="spacingAndGlyphs">5/1</text>
<line x1="70.6" y1="307.4" x2="70.6" y2="322.6" stroke="#111" stroke-width="1"/>
<text x="70.12" y="319.7" font-size="11.6" fill="#111" textLength="23.59" lengthAdjust="spacingAndGlyphs">5/15</text>
<text x="70.57" y="335.8" font-size="11.6" fill="#111" textLength="56.4" lengthAdjust="spacingAndGlyphs">Assign PM</text>
<text x="69.68" y="360" font-size="11.6" fill="#111" textLength="31.44" lengthAdjust="spacingAndGlyphs">[Text]</text>
<rect x="29.5" y="472.5" width="228" height="95.5" fill="#fff" stroke="#8a8a8a" stroke-width="1"/>
<text x="33.69" y="486.6" font-size="10.8" fill="#333" textLength="73.66" lengthAdjust="spacingAndGlyphs" font-weight="bold">Basic Timeline</text>
<text x="36.4" y="502.7" font-size="10.8" fill="#333" textLength="201.86" lengthAdjust="spacingAndGlyphs">Use to show sequential steps in a task,</text>
<text x="36.52" y="515.7" font-size="10.8" fill="#333" textLength="170.45" lengthAdjust="spacingAndGlyphs">process, or workflow, or to show</text>
<text x="37.12" y="528.6" font-size="10.8" fill="#333" textLength="194.65" lengthAdjust="spacingAndGlyphs">timeline information. Works well with</text>
<text x="36.56" y="541.5" font-size="10.8" fill="#333" textLength="148.06" lengthAdjust="spacingAndGlyphs">both Level 1 and Level 2 text.</text>
<text x="37.25" y="558.4" font-size="10.8" fill="#333" textLength="186.35" lengthAdjust="spacingAndGlyphs">Learn more about SmartArt graphics</text>
<line x1="38" y1="560.6" x2="223.4" y2="560.6" stroke="#333" stroke-width="1"/>
</svg></div>
<!-- horizontal scrollbar -->
<div class="rg" style="left:18px;top:624px;width:840px;height:16px;"><svg width="840" height="16" viewBox="18 624 840 16">
<rect x="21.5" y="624.5" width="840" height="14" fill="#fff" stroke="#ababab" stroke-width="1"/>
<line x1="35.5" y1="624.5" x2="35.5" y2="638.5" stroke="#ababab" stroke-width="1"/>
<line x1="36.6" y1="625" x2="36.6" y2="638" stroke="#b8b8b8" stroke-width="1"/>
<path d="M30.4 628.2V635L26.2 631.6Z" fill="#666"/>
</svg></div>
<!-- status bar -->
<div class="rg" style="left:18px;top:640px;width:840px;height:23px;background:#2b579a;"><svg width="840" height="23" viewBox="18 640 840 23">
<text x="25.77" y="654.8" font-size="11" fill="#fff" textLength="50.52" lengthAdjust="spacingAndGlyphs">0 WORDS</text>
<path d="M96.5 644.9H102.4V654.7H96.5Z" fill="none" stroke="#fff" stroke-width="1.1"/>
<path d="M102.4 644.9H108.7V647.4M102.4 654.7H108.7V651.6" fill="none" stroke="#fff" stroke-width="1.1"/>
<path d="M100.8 655L102.4 657L104 655Z" fill="#fff"/>
<path d="M104.2 649.6L106 651.4L110 647.2" fill="none" stroke="#fff" stroke-width="1.2"/>
</svg></div>
<div id="frame"></div>
</body>
</html>
